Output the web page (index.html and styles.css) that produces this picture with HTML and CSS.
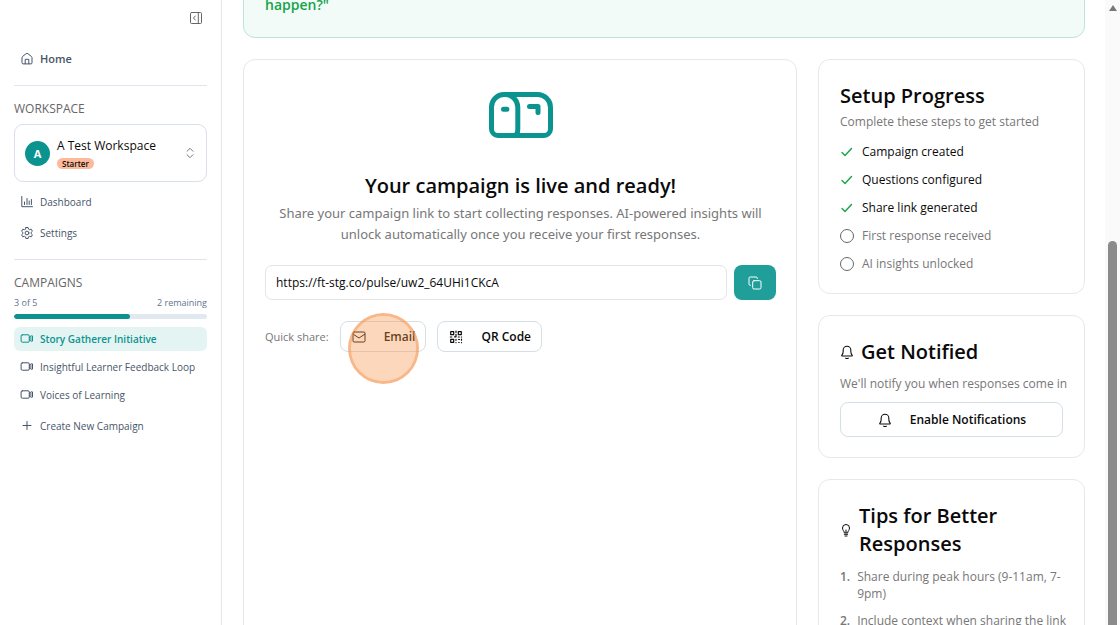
FILE: index.html
```html
<!DOCTYPE html>
<html lang="en">
<head>
<meta charset="utf-8">
<meta name="viewport" content="width=device-width, initial-scale=1">
<title>Campaign</title>
<link rel="stylesheet" href="styles.css">
</head>
<body>
<svg class="defs" aria-hidden="true">
  <symbol id="video" viewBox="0 0 14 14"><path d="M2.300 2.800h5.800a1.200 1.200 0 0 1 1.200 1.200v5a1.200 1.200 0 0 1-1.200 1.200H2.300A1.200 1.200 0 0 1 1.100 9V4a1.200 1.200 0 0 1 1.200-1.200zM9.300 5.600l1.500-1.700h1.700v5.200h-1.700L9.300 7.400M10.900 5.500v2"/></symbol>
  <symbol id="bell" viewBox="1 1 22 22"><path d="M4 17c1.500-1.500 2-3.300 2-6V9a6 6 0 0 1 12 0v2c0 2.700.5 4.500 2 6 .5.600.2 1.200-.6 1.200H4.600C3.800 18.200 3.500 17.600 4 17zM10 21.700c1.200.7 2.800.7 4 0"/></symbol>
  <symbol id="check" viewBox="0 0 14 14"><path d="M2 7.600l3 3 6.500-7"/></symbol>
</svg>
<div class="app">
  <aside class="sidebar">
    <div class="sidebar-top">
      <button class="icon-button" aria-label="Collapse sidebar">
        <svg class="icon" viewBox="0 0 14 14"><rect x="1.500" y="1.500" width="11" height="11" rx="1"/><path d="M9.300 1.500v11M6.300 5L4.500 7l1.800 2"/></svg>
      </button>
    </div>
    <a class="nav-item nav-home" href="#">
      <svg class="icon" viewBox="0 0 14 14"><path d="M2 5.600a1.500 1.500 0 0 1 .5-1.100l3.600-2.800a1.500 1.500 0 0 1 1.800 0l3.600 2.800a1.500 1.500 0 0 1 .5 1.100v5.300a1 1 0 0 1-1 1H3a1 1 0 0 1-1-1zM5.200 11.700V7.300h3.600v4.400"/></svg>
      Home
    </a>
    <hr class="divider">
    <h2 class="section-label">WORKSPACE</h2>
    <button class="workspace">
      <span class="avatar">A</span>
      <span class="workspace-info">
        <span class="workspace-name">A Test Workspace</span>
        <span class="plan">Starter</span>
      </span>
      <svg class="chevrons" viewBox="0 0 8 12"><path d="M1 4.300L4 1.300l3 3M1 7.700l3 3 3-3"/></svg>
    </button>
    <nav class="workspace-nav">
      <a class="nav-item" href="#">
        <svg class="icon" viewBox="0 0 14 14"><path d="M1.800 1.500v10.200h10.700M4.500 9.500V7M7 9.500V3.500M9.200 9.500V6M11.400 9.500V4.500"/></svg>
        Dashboard
      </a>
      <a class="nav-item" href="#">
        <svg class="icon" viewBox="0 0 14 14"><path d="M5.900 1.500h2.200l.4 1.600 1.100.6 1.600-.5 1.200 2-1.200 1.100v1.400l1.200 1.100-1.200 2-1.600-.5-1.100.6-.4 1.600H5.900l-.4-1.600-1.100-.6-1.600.5-1.200-2 1.200-1.100V6.300L1.600 5.200l1.200-2 1.600.5 1.100-.6z"/><circle cx="7" cy="7" r="1.900"/></svg>
        Settings
      </a>
    </nav>
    <hr class="divider">
    <h2 class="section-label">CAMPAIGNS</h2>
    <div class="quota"><span>3 of 5</span><span>2 remaining</span></div>
    <div class="meter"><div class="meter-fill" style="width:60%"></div></div>
    <nav class="campaigns">
      <a class="campaign active" href="#"><svg class="icon"><use href="#video"/></svg>Story Gatherer Initiative</a>
      <a class="campaign" href="#"><svg class="icon"><use href="#video"/></svg>Insightful Learner Feedback Loop</a>
      <a class="campaign" href="#"><svg class="icon"><use href="#video"/></svg>Voices of Learning</a>
    </nav>
    <a class="campaign create" href="#"><svg class="icon" viewBox="0 0 14 14"><path d="M7 2.500v8M3 6.500h8"/></svg>Create New Campaign</a>
  </aside>

  <main class="main">
    <section class="banner"><p class="banner-text">happen?"</p></section>
    <div class="columns">
      <section class="card launch">
        <svg class="mailbox" viewBox="0 0 64 46"><path d="M15 2.500h33.500a13 13 0 0 1 13 13V37a6.500 6.500 0 0 1-6.500 6.500H9A6.500 6.500 0 0 1 2.500 37V15A12.500 12.500 0 0 1 15 2.500zM16 2.500A12.800 12.800 0 0 1 28.800 15.300V37c0 3.500-1 6.500-4 6.500M14.500 17.300h3.400M40.500 14.500H49v6"/></svg>
        <h1 class="launch-title">Your campaign is live and ready!</h1>
        <p class="launch-text">Share your campaign link to start collecting responses. AI-powered insights will unlock automatically once you receive your first responses.</p>
        <div class="link-row">
          <input class="link-input" type="text" aria-label="Campaign link" value="https://ft-stg.co/pulse/uw2_64UHi1CKcA" readonly>
          <button class="copy" aria-label="Copy link">
            <svg class="icon" viewBox="0 0 14 14"><rect x="4.700" y="4.700" width="8.300" height="8.300" rx="1.300"/><path d="M2.600 9.300H2.200A1.200 1.200 0 0 1 1 8.100V2.200A1.200 1.200 0 0 1 2.200 1h5.900a1.200 1.200 0 0 1 1.200 1.200v.4"/></svg>
          </button>
        </div>
        <div class="share-row">
          <span class="share-label">Quick share:</span>
          <div class="share-email">
            <button class="button">
              <svg class="icon" viewBox="0 0 14 14"><rect x="1" y="2" width="12" height="10" rx="1.200"/><path d="M1.200 4.200L7 8l5.800-3.800"/></svg>
              Email
            </button>
            <span class="click-marker"></span>
          </div>
          <button class="button">
            <svg class="icon qr" viewBox="0 0 14 14"><path d="M1.700 1.700h3v3h-3zM9.300 1.700h3v3h-3zM1.700 9.300h3v3h-3zM7 1v1.500M7 4.300v2.500H5.500M1.300 7h1.500M9.300 7h1M12.300 7h.4M7 9.300v1M7 12.500v.2M9.500 9.500h1M12.500 9.200v1M9.700 12.500h.5M12.500 12.500v.2"/></svg>
            QR Code
          </button>
        </div>
      </section>

      <div class="side">
        <section class="card">
          <h2 class="card-title">Setup Progress</h2>
          <p class="card-text">Complete these steps to get started</p>
          <ul class="steps">
            <li class="step done"><svg class="icon"><use href="#check"/></svg>Campaign created</li>
            <li class="step done"><svg class="icon"><use href="#check"/></svg>Questions configured</li>
            <li class="step done"><svg class="icon"><use href="#check"/></svg>Share link generated</li>
            <li class="step"><span class="ring"></span>First response received</li>
            <li class="step"><span class="ring"></span>AI insights unlocked</li>
          </ul>
        </section>
        <section class="card">
          <h2 class="card-title with-icon"><svg class="icon"><use href="#bell"/></svg>Get Notified</h2>
          <p class="card-text notify-text">We'll notify you when responses come in</p>
          <button class="button enable"><svg class="icon"><use href="#bell"/></svg>Enable Notifications</button>
        </section>
        <section class="card">
          <h2 class="card-title with-icon"><svg class="bulb" viewBox="0 0 12 14"><path d="M4.300 9.500C4.300 8 2.500 7.400 2.500 5a3.500 3.500 0 0 1 7 0c0 2.400-1.800 3-1.800 4.500zM4.300 11.300h3.400M5 13h2M6 9.500V7"/></svg><span>Tips for Better Responses</span></h2>
          <ol class="tips">
            <li class="tip"><b class="tip-number">1.</b><span>Share during peak hours (9-11am, 7-9pm)</span></li>
            <li class="tip"><b class="tip-number">2.</b><span>Include context when sharing the link</span></li>
          </ol>
        </section>
      </div>
    </div>
  </main>
  <div class="scrollbar" aria-hidden="true"><span class="scroll-arrow"></span><span class="scroll-thumb"></span></div>
</div>
</body>
</html>
```

FILE: styles.css
```css
* { box-sizing: border-box; }
body {
  margin: 0;
  font-family: "Segoe UI", "Open Sans", "Noto Sans", sans-serif;
  font-size: 12px;
  line-height: 18px;
  color: #0a0a0a;
  background: #fff;
}
h1, h2, p, ul, ol { margin: 0; padding: 0; font-weight: 400; }
ul, ol { list-style: none; }
a { color: inherit; text-decoration: none; }
button, input { font: inherit; color: inherit; background: #fff; }
.defs { display: none; }
.icon {
  width: 14px;
  height: 14px;
  flex: none;
}
svg { fill: none; stroke: currentColor; stroke-width: 1; stroke-linecap: round; stroke-linejoin: round; }
.app { display: flex; height: 100vh; overflow: hidden; }

.sidebar {
  flex: none;
  width: 222px;
  padding: 10px 14px;
  border-right: 1px solid #e5e7eb;
  color: #475569;
}
.sidebar-top { display: flex; justify-content: flex-end; padding-right: 3px; }
.icon-button { display: flex; padding: 1px; border: 0; color: #666; }
.nav-item { display: flex; align-items: center; gap: 6px; height: 31px; padding: 0 6px; font-size: 10px; }
.nav-home { margin-top: 17px; font-weight: 600; font-size: 11px; }
.divider { margin: 11px 0 14px; border: 0; border-top: 1px solid #dfe5ec; }
.section-label { font-size: 12px; font-weight: 500; line-height: 18px; color: #666; }
.workspace {
  display: flex;
  align-items: center;
  gap: 7px;
  width: 100%;
  height: 58px;
  margin: 6px 0 4px;
  padding: 0 12px 0 10px;
  border: 1px solid #d8e0e8;
  border-radius: 9px;
  text-align: left;
}
.avatar {
  width: 25px;
  height: 25px;
  border-radius: 50%;
  background: #0b9390;
  color: #fff;
  font-size: 11px;
  font-weight: 700;
  line-height: 25px;
  text-align: center;
}
.workspace-info { display: flex; flex: 1; flex-direction: column; align-items: flex-start; gap: 3px; color: #0a0a0a; }
.workspace-name { line-height: 18px; }
.plan { padding: 0 5px; border-radius: 6px; background: #fdba9b; font-size: 8px; font-weight: 600; line-height: 11px; }
.chevrons { width: 8px; height: 12px; color: #777; }
.quota { display: flex; justify-content: space-between; margin-top: 4px; font-size: 9px; line-height: 14px; color: #64748b; }
.meter { height: 5px; margin: 4px 0 8px; border-radius: 3px; background: #e2e8f0; overflow: hidden; }
.meter-fill { height: 100%; border-radius: 3px; background: #0b9390; }
.campaigns { display: grid; grid-template-columns: minmax(0, 1fr); gap: 4px; }
.campaign { display: flex; align-items: center; gap: 6px; height: 24px; padding: 0 6px; border-radius: 6px; font-size: 10px; white-space: nowrap; }
.campaign.active { background: #e4f4f2; color: #0b9390; font-weight: 600; }
.create { margin-top: 7px; }

.main { flex: 1; min-width: 0; padding: 0 20px 0 21px; }
.banner {
  margin-top: -28px;
  padding: 21px;
  border: 1px solid #b9e6d7;
  border-radius: 12px;
  background: #f2fbf8;
}
.banner-text { color: #16a34a; font-size: 14px; font-weight: 600; line-height: 22px; }
.columns { display: grid; grid-template-columns: minmax(0, 1fr) 267px; gap: 21px; margin-top: 21px; }
.card { padding: 22px 21px 20px; border: 1px solid #e8e8e8; border-radius: 12px; }
.launch { display: flex; flex-direction: column; padding: 32px 20px 32px 21px; }
.mailbox { align-self: center; width: 64px; height: 46px; color: #0b9390; stroke-width: 5; }
.launch-title { margin-top: 34px; font-size: 20px; font-weight: 600; line-height: 28px; text-align: center; }
.launch-text { margin-top: 3px; font-family: "Segoe UI", "Noto Sans", sans-serif; font-size: 13px; line-height: 21px; color: #777; text-align: center; }
.link-row { display: flex; gap: 7px; margin-top: 20px; }
.link-input { flex: 1; min-width: 0; height: 35px; padding: 0 10px; border: 1px solid #e5e5e5; border-radius: 7px; font-size: 12px; }
.copy { display: grid; place-items: center; width: 42px; height: 35px; padding: 0; border: 0; border-radius: 8px; background: #1f9e9a; color: #fff; }
.share-row { display: flex; align-items: center; gap: 11px; margin-top: 21px; }
.share-label { font-size: 11px; color: #777; }
.share-email { position: relative; }
.button {
  display: flex;
  align-items: center;
  justify-content: center;
  gap: 18px;
  height: 31px;
  padding: 0 10px 0 11px;
  border: 1px solid #d5dfe5;
  border-radius: 8px;
  font-size: 12px;
  font-weight: 600;
  white-space: nowrap;
}
.qr { stroke-width: 1.2; }
.click-marker {
  position: absolute;
  top: -8px;
  left: 8px;
  width: 71px;
  height: 71px;
  border: 3px solid rgba(244, 145, 72, .65);
  border-radius: 50%;
  background: rgba(249, 150, 75, .38);
  background-clip: padding-box;
}
.side { display: grid; grid-template-columns: minmax(0, 1fr); gap: 21px; align-content: start; }
.card-title { font-size: 20px; font-weight: 600; line-height: 28px; }
.card-text { margin-top: 3px; line-height: 17px; color: #777; white-space: nowrap; }
.with-icon { display: flex; align-items: center; gap: 7px; }
.with-icon .icon, .enable .icon { stroke-width: 1.7; }
.steps { display: grid; gap: 10px; margin-top: 13px; }
.step { display: flex; align-items: center; gap: 8px; color: #777; }
.step.done { color: #0a0a0a; }
.step .icon { color: #16a34a; stroke-width: 1.4; }
.ring { width: 14px; height: 14px; border: 1px solid #666; border-radius: 50%; }
.notify-text { margin-top: 9px; }
.enable { width: 100%; height: 35px; margin-top: 10px; }
.bulb { flex: none; width: 12px; height: 14px; }
.tips { display: grid; gap: 10px; margin: 10px -12px 0 0; color: #777; }
.tip { display: flex; gap: 7px; line-height: 17px; }
.tip-number { flex: none; font-weight: 600; }
.scrollbar { display: flex; flex: none; flex-direction: column; align-items: center; width: 15px; background: #fafafa; }
.scroll-arrow { margin-top: 5px; border: 4px solid transparent; border-top-width: 0; border-bottom: 6px solid #777; }
.scroll-thumb { width: 9px; flex: 1; margin-top: 230px; border-radius: 5px 5px 0 0; background: #8b8b8b; }
```
